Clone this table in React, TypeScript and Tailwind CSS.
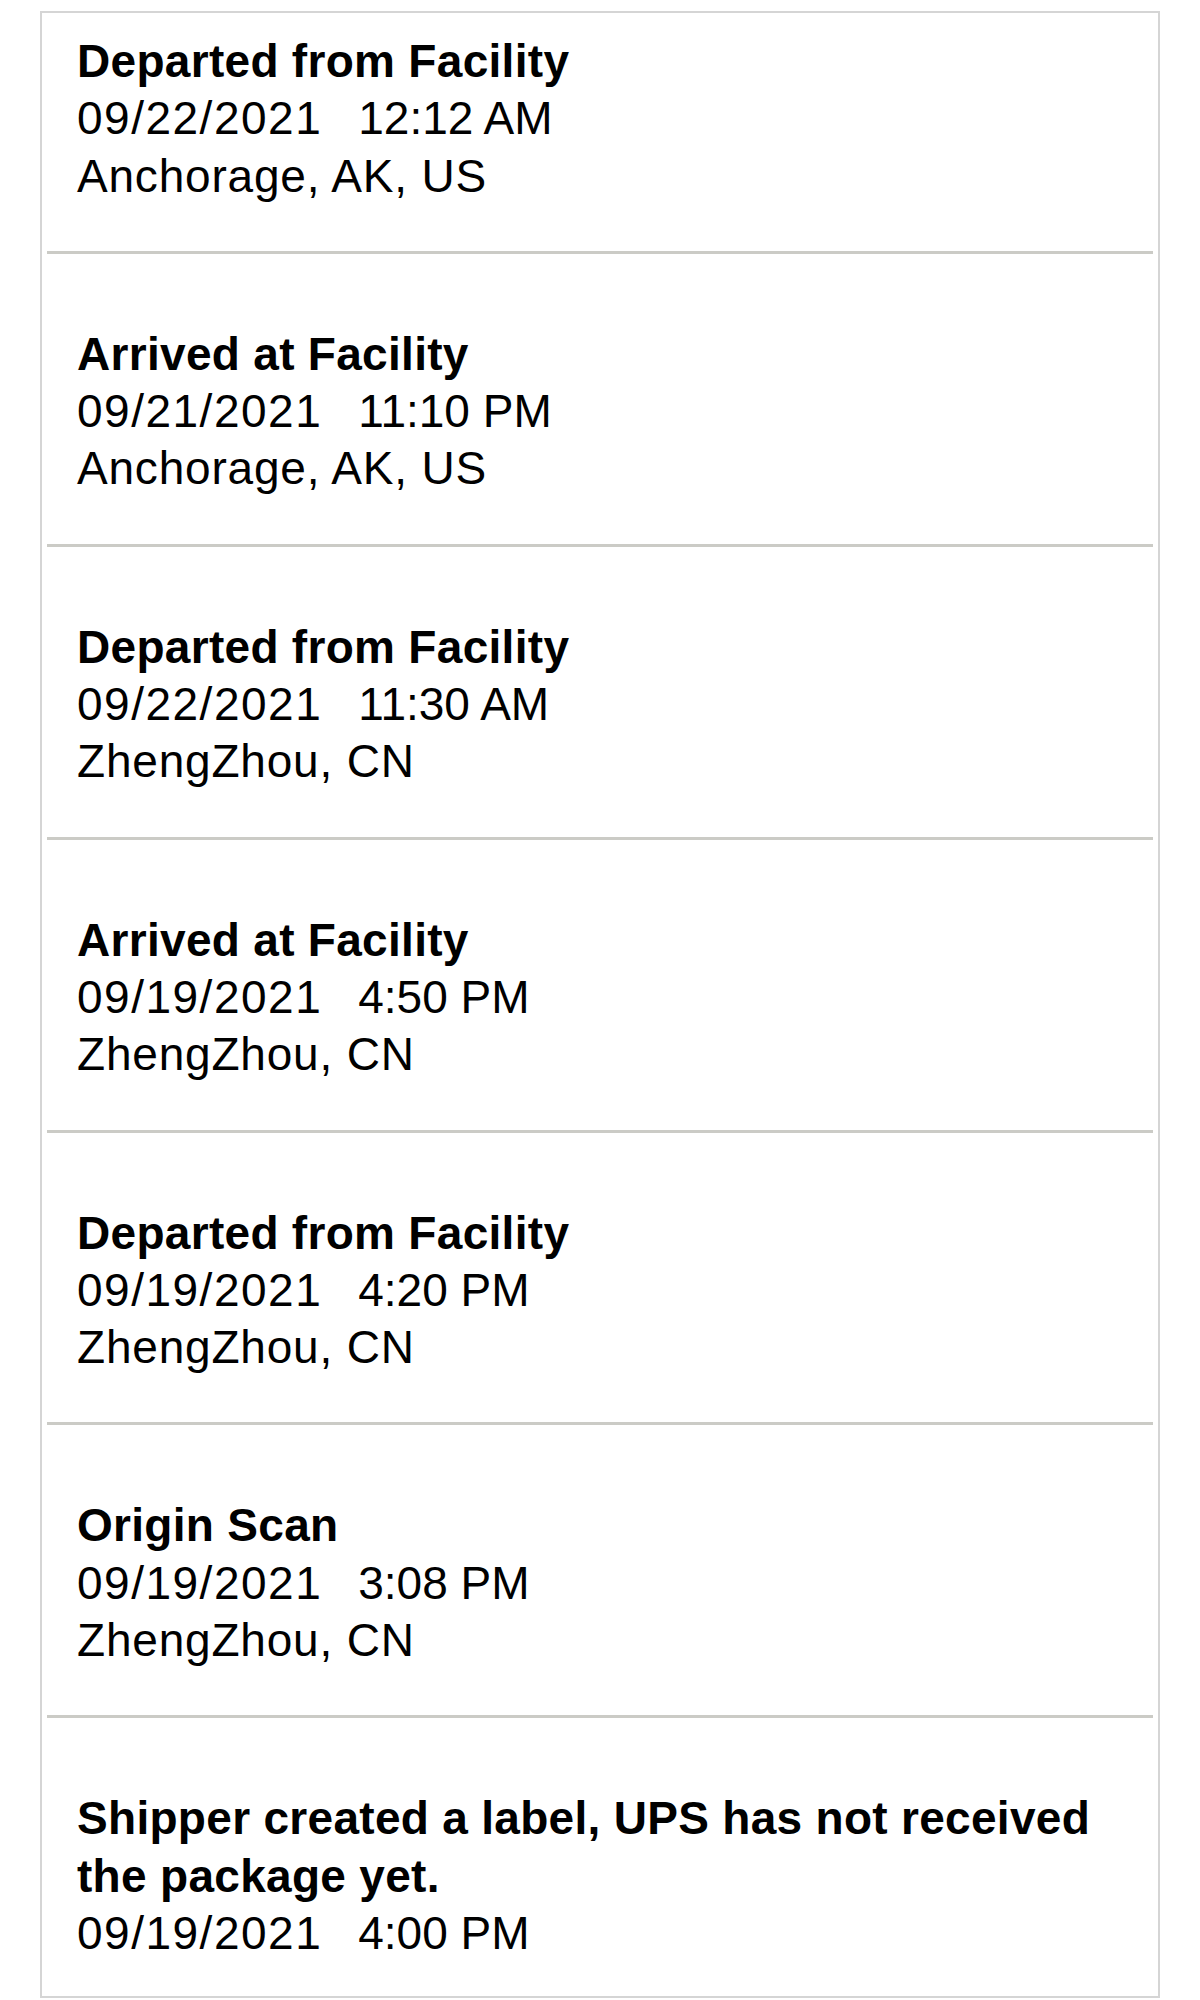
const events = [
  { status: 'Departed from Facility', date: '09/22/2021', time: '12:12 AM', place: 'Anchorage, AK, US' },
  { status: 'Arrived at Facility', date: '09/21/2021', time: '11:10 PM', place: 'Anchorage, AK, US' },
  { status: 'Departed from Facility', date: '09/22/2021', time: '11:30 AM', place: 'ZhengZhou, CN' },
  { status: 'Arrived at Facility', date: '09/19/2021', time: '4:50 PM', place: 'ZhengZhou, CN' },
  { status: 'Departed from Facility', date: '09/19/2021', time: '4:20 PM', place: 'ZhengZhou, CN' },
  { status: 'Origin Scan', date: '09/19/2021', time: '3:08 PM', place: 'ZhengZhou, CN' },
  { status: 'Shipper created a label, UPS has not received the package yet.', date: '09/19/2021', time: '4:00 PM' },
]

type Event = (typeof events)[number] & { place?: string }

function Row({ ev, first, last }: { ev: Event; first: boolean; last: boolean }) {
  return (
    <div className="px-[5px]">
      <div
        className={
          'pl-[30px] pr-[30px] ' +
          (first ? 'pt-[20px] ' : 'pt-[72px] ') +
          (last ? 'pb-[34px]' : 'pb-[46px]')
        }
      >
        <div className="font-bold tracking-[0.3px]">{ev.status}</div>
        <div className="whitespace-nowrap">
          <span className="tracking-[1.5px]">{ev.date}</span>
          <span className="ml-[36px]">{ev.time}</span>
        </div>
        {ev.place && <div className="tracking-[0.8px]">{ev.place}</div>}
      </div>
      {!last && <div className="h-[3px] bg-[#cbcbc6]" />}
    </div>
  )
}

export default function App() {
  return (
    <div
      className="bg-white min-h-[2000px] px-10 pt-[11px] text-black text-[46px] leading-[57.3px]"
      style={{ fontFamily: '"Liberation Sans", Arial, sans-serif' }}
    >
      <div className="border-2 border-[#d5d5d5] bg-white">
        {events.map((ev, i) => (
          <Row key={i} ev={ev} first={i === 0} last={i === events.length - 1} />
        ))}
      </div>
    </div>
  )
}
